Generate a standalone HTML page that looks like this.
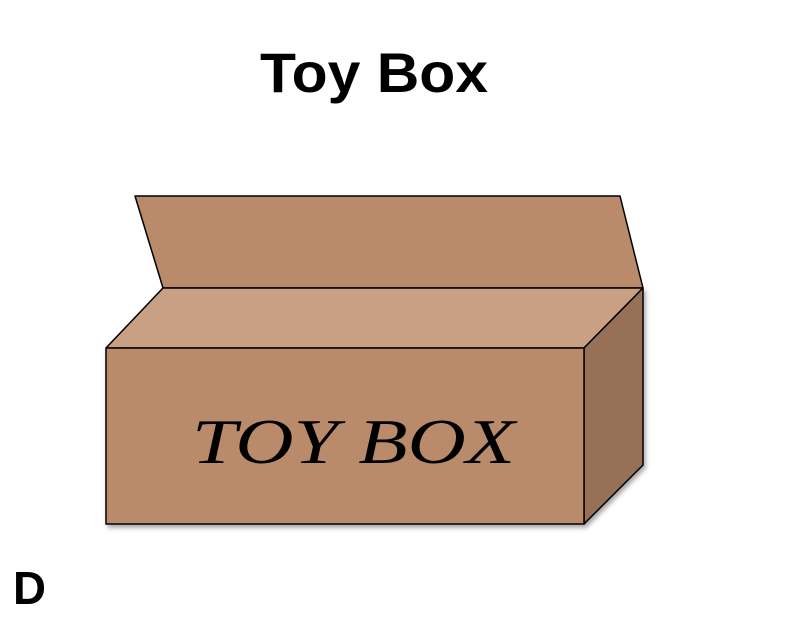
<!DOCTYPE html>
<html><head><style>
html,body{margin:0;padding:0;background:#fff;width:798px;height:628px;overflow:hidden}
</style></head><body>
<svg width="798" height="628" viewBox="0 0 798 628" xmlns="http://www.w3.org/2000/svg">
<defs><filter id="sh" x="-10%" y="-10%" width="130%" height="130%"><feDropShadow dx="2" dy="3" stdDeviation="2.5" flood-color="#000" flood-opacity="0.35"/></filter></defs>
<text x="260" y="92" textLength="228" lengthAdjust="spacingAndGlyphs" font-family="Liberation Sans, sans-serif" font-weight="bold" font-size="56">Toy Box</text>
<text x="13" y="604" textLength="33" lengthAdjust="spacingAndGlyphs" font-family="Liberation Sans, sans-serif" font-weight="bold" font-size="46">D</text>
<g stroke="#000" stroke-width="1.5" stroke-linejoin="round">
<polygon points="135,196 620,196 643,288 163,288" fill="#B98B6A"/>
<g filter="url(#sh)">
<polygon points="163,288 643,288 584,348 106,348" fill="#C8A185"/>
<polygon points="584,348 643,288 643,465 584,524" fill="#977155"/>
<rect x="106" y="348" width="478" height="176" fill="#B98B6A"/>
</g>
</g>
<text x="192" y="463" textLength="323" lengthAdjust="spacingAndGlyphs" font-family="Liberation Serif, serif" font-style="italic" font-size="64">TOY BOX</text>
</svg>
</body></html>
